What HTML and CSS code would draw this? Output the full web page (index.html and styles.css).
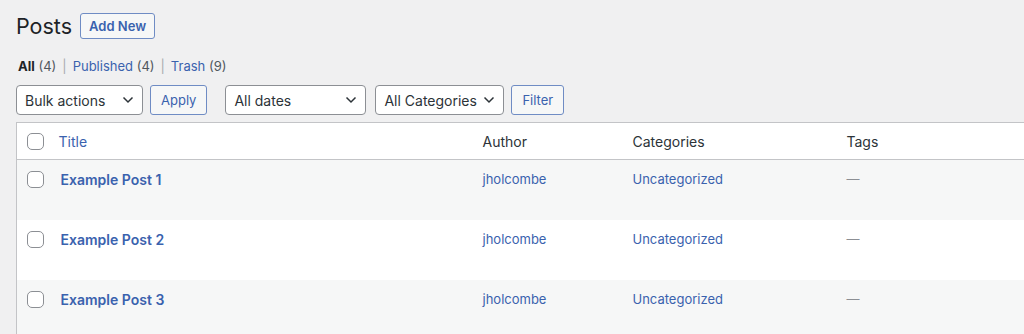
FILE: index.html
```html
<!DOCTYPE html>
<html>
<head>
    <meta charset="utf-8" />
    <title>Posts</title>
    <link rel="stylesheet" href="styles.css">
</head>
<body>
    <div class="wrap">
        <div class="page_header">
            <h1>Posts</h1>
            <a class="btn_add" href="#">Add New</a>
        </div>

        <ul class="views">
            <li><b>All</b> <span class="count">(4)</span></li>
            <li class="sep">|</li>
            <li><a href="#">Published</a> <span class="count">(4)</span></li>
            <li class="sep">|</li>
            <li><a href="#">Trash</a> <span class="count">(9)</span></li>
        </ul>

        <div class="tablenav">
            <div class="select select_bulk">
                <span>Bulk actions</span>
                <svg width="12" height="8" viewBox="0 0 12 8"><path d="M1.5 1.5 L6 6 L10.5 1.5" fill="none" stroke="#2c3338" stroke-width="1.5" /></svg>
            </div>
            <a class="btn" href="#">Apply</a>
            <div class="select select_dates">
                <span>All dates</span>
                <svg width="12" height="8" viewBox="0 0 12 8"><path d="M1.5 1.5 L6 6 L10.5 1.5" fill="none" stroke="#2c3338" stroke-width="1.5" /></svg>
            </div>
            <div class="select select_cats">
                <span>All Categories</span>
                <svg width="12" height="8" viewBox="0 0 12 8"><path d="M1.5 1.5 L6 6 L10.5 1.5" fill="none" stroke="#2c3338" stroke-width="1.5" /></svg>
            </div>
            <a class="btn" href="#">Filter</a>
        </div>

        <table class="posts">
            <thead>
                <tr>
                    <th class="col_cb"><span class="checkbox"></span></th>
                    <th class="col_title"><a href="#">Title</a></th>
                    <th class="col_author">Author</th>
                    <th class="col_cats">Categories</th>
                    <th class="col_tags">Tags</th>
                </tr>
            </thead>
            <tbody>
                <tr class="alt">
                    <td class="col_cb"><span class="checkbox"></span></td>
                    <td class="col_title"><a class="row_title" href="#">Example Post 1</a></td>
                    <td><a href="#">jholcombe</a></td>
                    <td><a href="#">Uncategorized</a></td>
                    <td class="dash">—</td>
                </tr>
                <tr>
                    <td class="col_cb"><span class="checkbox"></span></td>
                    <td class="col_title"><a class="row_title" href="#">Example Post 2</a></td>
                    <td><a href="#">jholcombe</a></td>
                    <td><a href="#">Uncategorized</a></td>
                    <td class="dash">—</td>
                </tr>
                <tr class="alt">
                    <td class="col_cb"><span class="checkbox"></span></td>
                    <td class="col_title"><a class="row_title" href="#">Example Post 3</a></td>
                    <td><a href="#">jholcombe</a></td>
                    <td><a href="#">Uncategorized</a></td>
                    <td class="dash">—</td>
                </tr>
            </tbody>
        </table>
    </div>
</body>
</html>
```

FILE: styles.css
```css
* {
    font-family: Inter, "Liberation Sans", Arial, sans-serif;
    box-sizing: border-box;
}

body {
    margin: 0;
    background-color: #f0f0f1;
    color: #2c3338;
    font-size: 14px;
    overflow: hidden;
}

a {
    color: #3a62ae;
    text-decoration: none;
}

.wrap {
    padding: 13px 0 0 16px;
    overflow: hidden;
}

.page_header {
    display: flex;
    align-items: center;
    gap: 8px;
    height: 26px;
}

h1 {
    margin: 0;
    font-size: 21.5px;
    font-weight: 400;
    line-height: 26px;
    color: #1d2327;
}

.btn_add {
    display: flex;
    align-items: center;
    height: 26px;
    padding: 0 8px;
    border: 1px solid #6f8cc4;
    border-radius: 3px;
    background-color: #f6f7f7;
    font-size: 13px;
    font-weight: 600;
}

.views {
    display: flex;
    gap: 6px;
    list-style: none;
    margin: 18px 0 0 2px;
    padding: 0;
    line-height: 18px;
    font-size: 13px;
}

.views b {
    color: #1d2327;
}

.count {
    color: #50575e;
}

.sep {
    color: #a7aaad;
}

.tablenav {
    display: flex;
    align-items: center;
    height: 30px;
    margin-top: 10px;
}

.select {
    display: flex;
    align-items: center;
    justify-content: space-between;
    height: 30px;
    padding: 0 8px 0 8px;
    background-color: #fff;
    border: 1px solid #8c8f94;
    border-radius: 4px;
    font-size: 14px;
    color: #2c3338;
}

.select_bulk {
    width: 127px;
    margin-right: 7px;
}

.select_dates {
    width: 141px;
    margin-left: 18px;
    margin-right: 9px;
}

.select_cats {
    width: 129px;
    margin-right: 7px;
}

.btn {
    display: flex;
    align-items: center;
    height: 30px;
    padding: 0 10px;
    border: 1px solid #6f8cc4;
    border-radius: 3px;
    background-color: #f6f7f7;
    font-size: 13px;
}

.posts {
    margin-top: 7px;
    width: 1060px;
    border-collapse: collapse;
    border: 1px solid #c3c4c7;
    background-color: #fff;
    table-layout: fixed;
}

.posts th {
    height: 37px;
    padding: 0 8px;
    text-align: left;
    font-weight: 400;
    color: #2c3338;
    border-bottom: 1px solid #c3c4c7;
    vertical-align: middle;
}

.posts td {
    height: 60px;
    padding: 10px 8px 0 8px;
    vertical-align: top;
    line-height: 19px;
    font-size: 13px;
}

.posts tr.alt td {
    background-color: #f6f7f7;
}

.col_cb {
    width: 34px;
}

.posts th.col_cb,
.posts td.col_cb {
    padding-left: 10px;
    padding-right: 0;
}

.posts td.col_cb {
    padding-top: 11px;
}

.col_title {
    width: 424px;
}

.col_author {
    width: 150px;
}

.col_cats {
    width: 214px;
}

.checkbox {
    display: block;
    width: 17px;
    height: 17px;
    border: 1px solid #8c8f94;
    border-radius: 5px;
    background-color: #fff;
}

.posts td .row_title {
    font-weight: 600;
    font-size: 14px;
    padding-left: 2px;
}

.dash {
    color: #8c8f94;
}
```
